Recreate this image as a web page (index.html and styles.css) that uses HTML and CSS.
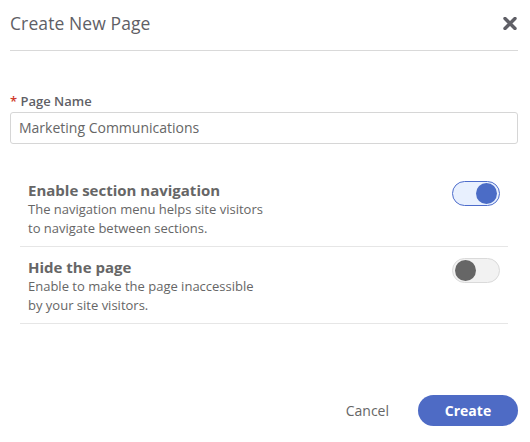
FILE: index.html
```html
<!DOCTYPE html>
<html>
<head>
<meta charset="utf-8">
<link rel="stylesheet" href="styles.css">
</head>
<body>
<div class="modal">
  <div class="header">
    <h1 class="title">Create New Page</h1>
    <span class="close" aria-label="Close">
      <svg width="14" height="13" viewBox="0 0 14 13"><path d="M2 1.5 L12 11.5 M12 1.5 L2 11.5" stroke="#5f5f66" stroke-width="3.4" stroke-linecap="round"/></svg>
    </span>
  </div>
  <div class="field">
    <label class="label"><span class="req">*</span> Page Name</label>
    <div class="input">Marketing Communications</div>
  </div>
  <div class="options">
    <div class="option">
      <div class="option-text">
        <div class="option-title">Enable section navigation</div>
        <div class="option-desc">The navigation menu helps site visitors<br>to navigate between sections.</div>
      </div>
      <span class="toggle on"><span class="knob"></span></span>
    </div>
    <div class="option">
      <div class="option-text">
        <div class="option-title">Hide the page</div>
        <div class="option-desc">Enable to make the page inaccessible<br>by your site visitors.</div>
      </div>
      <span class="toggle"><span class="knob"></span></span>
    </div>
  </div>
  <div class="footer">
    <span class="cancel">Cancel</span>
    <span class="create">Create</span>
  </div>
</div>
</body>
</html>
```
FILE: styles.css
```css
html, body {
  margin: 0;
  padding: 0;
  background: #fff;
}
body {
  font-family: "Open Sans", "Liberation Sans", sans-serif;
  color: #666;
}
.modal {
  width: 530px;
  height: 442px;
  box-sizing: border-box;
  padding: 0 12px 0 10px;
  display: flex;
  flex-direction: column;
}
.header {
  height: 51px;
  border-bottom: 1px solid #d9d9d9;
  display: flex;
  align-items: center;
  justify-content: space-between;
  box-sizing: border-box;
  padding-bottom: 4px;
}
.title {
  margin: 0;
  font-size: 17.5px;
  font-weight: 400;
  color: #5f5f66;
  letter-spacing: 0.1px;
}
.close {
  display: flex;
  margin-right: 1px;
}
.field {
  margin-top: 41px;
}
.label {
  display: block;
  font-size: 13px;
  font-weight: 600;
  color: #5f5f66;
  line-height: 18px;
  margin-bottom: 2px;
}
.req {
  color: #d0392b;
}
.input {
  height: 32px;
  box-sizing: border-box;
  border: 1px solid #d6d6d6;
  border-radius: 3px;
  padding: 0 8px;
  font-size: 14px;
  line-height: 30px;
  color: #666;
}
.options {
  margin: 26px 10px 0 10px;
}
.option {
  display: flex;
  justify-content: space-between;
  align-items: flex-start;
  padding: 10px 8px 8px 8px;
  border-bottom: 1px solid #e6e6e6;
}
.option-title {
  font-size: 15px;
  font-weight: 700;
  line-height: 20px;
  color: #666;
}
.option-desc {
  font-size: 13px;
  line-height: 19px;
  color: #666;
}
.toggle {
  width: 48px;
  height: 25px;
  box-sizing: border-box;
  border-radius: 13px;
  border: 1px solid #dadada;
  background: #f2f2f2;
  display: flex;
  align-items: center;
  padding: 0 2px;
  margin-top: 1px;
}
.toggle .knob {
  width: 21px;
  height: 21px;
  border-radius: 50%;
  background: #666;
}
.toggle.on {
  border-color: #4d6ccb;
  background: #e8f0fe;
  justify-content: flex-end;
}
.toggle.on .knob {
  background: #4b6cc6;
}
.footer {
  margin-top: auto;
  margin-bottom: 16px;
  display: flex;
  justify-content: flex-end;
  align-items: center;
  gap: 29px;
}
.cancel {
  font-size: 14px;
  color: #666;
}
.create {
  width: 100px;
  height: 31px;
  border-radius: 16px;
  background: #4e6bc5;
  color: #fff;
  font-size: 14px;
  font-weight: 700;
  display: flex;
  align-items: center;
  justify-content: center;
}
```
